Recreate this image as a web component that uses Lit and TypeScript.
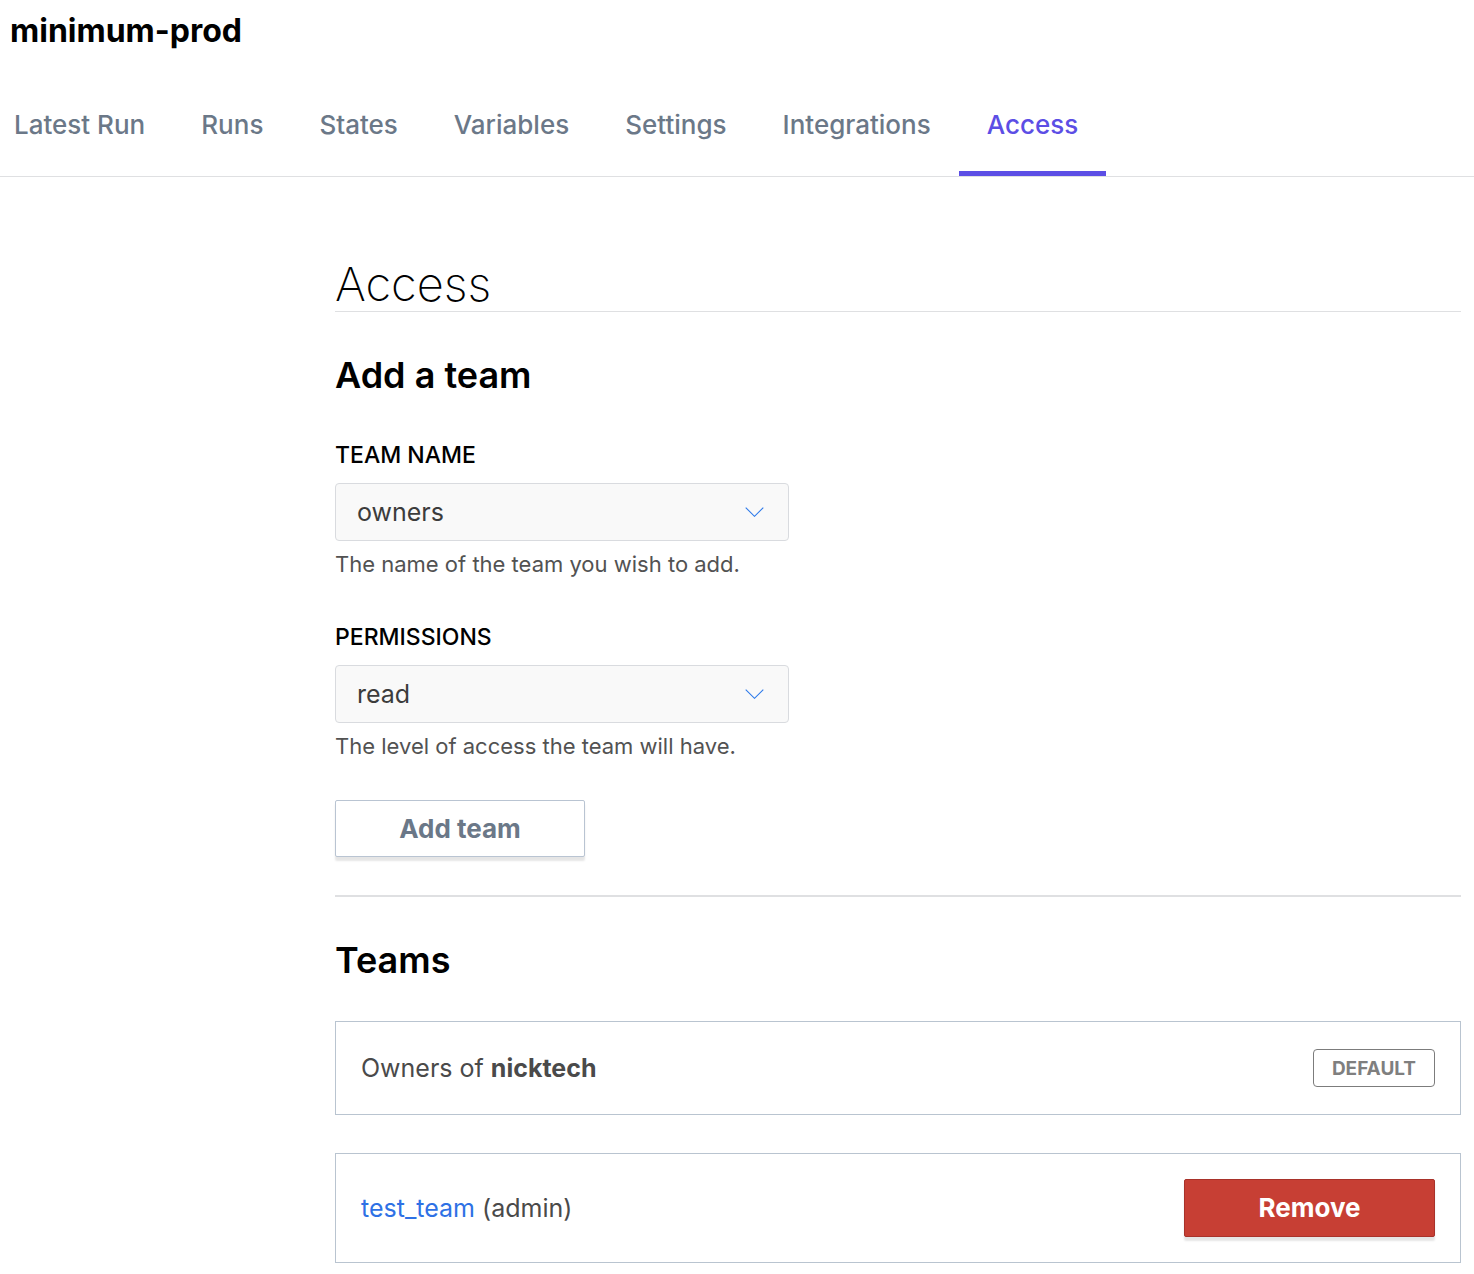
import { LitElement, html, css } from "lit";
import { customElement } from "lit/decorators.js";

const tabs = ["Latest Run", "Runs", "States", "Variables", "Settings", "Integrations", "Access"];

@customElement("app-root")
export class AppRoot extends LitElement {
  static styles = css`
    :host { display: block; min-height: 100vh; background: #fff; color: #000; font-family: Inter, sans-serif; font-size: 25px; line-height: 32px; box-sizing: border-box; }
    *, *::before, *::after { box-sizing: border-box; }
    h1, h2, h3, p, ul { margin: 0; padding: 0; }
    .title { padding: 14px 10px 0; font-size: 32px; line-height: 34px; font-weight: 700; }
    .tabs { display: flex; height: 129px; padding-top: 30px; border-bottom: 1px solid #dfe0e2; }
    .tab { display: flex; align-items: center; padding: 0 28px; border-bottom: 5px solid transparent; color: #6b7888; font-size: 26px; font-weight: 500; text-decoration: none; }
    .tab:first-child { padding-left: 14px; }
    .tab.active { color: #5c4ee5; border-color: #5c4ee5; }
    main { padding: 80px 13px 11px 335px; }
    .page { font-size: 47px; line-height: 54px; font-weight: 200; border-bottom: 1px solid #dfe0e2; }
    .heading { margin-top: 38px; font-size: 36px; line-height: 50px; font-weight: 600; }
    form { padding-bottom: 38px; border-bottom: 2px solid #dfe0e2; }
    .fields { display: grid; gap: 46px; max-width: 454px; margin: 39px 0 43px; }
    .field { display: grid; gap: 12px; }
    .field label { font-size: 23px; line-height: 32px; font-weight: 500; }
    .select { display: grid; align-items: center; }
    .select > * { grid-area: 1 / 1; }
    select { appearance: none; width: 100%; height: 58px; padding: 0 21px; border: 1px solid #d9dbdf; border-radius: 4px; background: #f9f9f9; color: #3c3c3c; font: inherit; }
    .chevron { justify-self: end; margin-right: 25px; pointer-events: none; }
    .hint { font-size: 22px; line-height: 22px; color: #525252; }
    button { width: 250px; height: 57px; border: 1px solid #b9c4d2; border-radius: 2px; background: #fff; color: #6b7888; font: inherit; font-size: 26px; font-weight: 700; box-shadow: 0 4px 2px #0000001a; }
    .teams { display: grid; gap: 38px; list-style: none; margin-top: 36px; }
    .card { display: flex; align-items: center; justify-content: space-between; min-height: 94px; padding: 25px; border: 1px solid #b9c4d0; color: #4a4a4a; }
    .badge { border: 1px solid #7c7c7c; border-radius: 4px; padding: 7px 18px 5px; font-size: 19px; line-height: 24px; font-weight: 700; color: #7f7f7f; }
    .link { color: #2e71e5; text-decoration: none; }
    .remove { width: 251px; height: 58px; background: #c73f34; color: #fff; border-color: #a8322a; }
  `;
  field(id: string, label: string, options: string[], hint: string) {
    return html`<div class="field">
      <label for=${id}>${label}</label>
      <div class="select">
        <select id=${id} aria-describedby="${id}-hint">${options.map((o) => html`<option>${o}</option>`)}</select>
        <svg class="chevron" width="19" height="10" viewBox="0 0 19 10" fill="none" stroke="#2f7bea" stroke-width="1.1" aria-hidden="true"><path d="M.7.6l8.8 8.7L18.3.6" /></svg>
      </div>
      <p class="hint" id="${id}-hint">${hint}</p>
    </div>`;
  }
  render() {
    return html`
      <h1 class="title">minimum-prod</h1>
      <nav class="tabs">${tabs.map((t) => html`<a class="tab ${t === "Access" ? "active" : ""}" href="#">${t}</a>`)}</nav>
      <main>
        <h2 class="page">Access</h2>
        <form @submit=${(e: Event) => e.preventDefault()}>
          <h3 class="heading">Add a team</h3>
          <div class="fields">
            ${this.field("team", "TEAM NAME", ["owners"], "The name of the team you wish to add.")}
            ${this.field("permissions", "PERMISSIONS", ["read"], "The level of access the team will have.")}
          </div>
          <button>Add team</button>
        </form>
        <h3 class="heading">Teams</h3>
        <ul class="teams">
          <li class="card"><span>Owners of <b>nicktech</b></span><span class="badge">DEFAULT</span></li>
          <li class="card"><span><a class="link" href="#">test_team</a> (admin)</span><button class="remove" type="button">Remove</button></li>
        </ul>
      </main>`;
  }
}
